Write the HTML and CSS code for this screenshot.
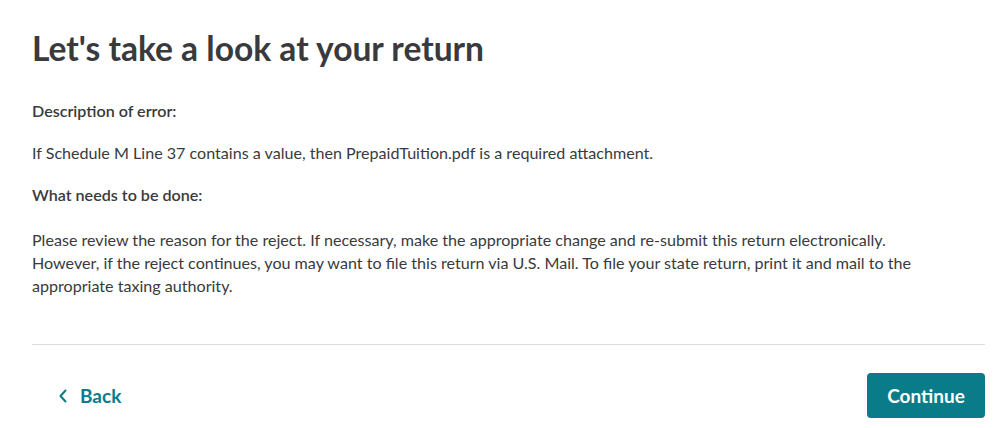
FILE: index.html
```html
<!DOCTYPE html>
<html lang="en">
<head>
    <meta charset="UTF-8">
    <title>Let's take a look at your return</title>
    <link rel="stylesheet" href="styles.css">
</head>
<body>
    <div class="page">
        <h1>Let's take a look at your return</h1>
        <p class="label">Description of error:</p>
        <p>If Schedule M Line 37 contains a value, then PrepaidTuition.pdf is a required attachment.</p>
        <p class="label">What needs to be done:</p>
        <p class="para">Please review the reason for the reject. If necessary, make the appropriate change and re-submit this return electronically.<br>
        However, if the reject continues, you may want to file this return via U.S. Mail. To file your state return, print it and mail to the<br>
        appropriate taxing authority.</p>
        <div class="footer">
            <button class="back-btn">
                <svg width="10" height="14" viewBox="0 0 10 14"><path d="M7.5 1.5 L2.5 7 L7.5 12.5" fill="none" stroke="#0a7b88" stroke-width="2" stroke-linecap="round" stroke-linejoin="round"/></svg>
                Back
            </button>
            <button class="continue-btn">Continue</button>
        </div>
    </div>
</body>
</html>
```

FILE: styles.css
```css
body {
    margin: 0;
    font-family: Lato, "Open Sans", sans-serif;
    color: #393a3d;
    background: white;
}
.page {
    padding: 23px 14px 0 32px;
}
h1 {
    font-size: 33.6px;
    font-weight: 700;
    margin: 0 0 26px;
    line-height: 50px;
}
p {
    font-size: 16.1px;
    line-height: 24px;
    margin: 0 0 18px;
}
.label {
    font-weight: 600;
}
.para {
    line-height: 23px;
    margin: 21px 0 0;
}
.footer {
    margin-top: 47px;
    border-top: 1px solid #dcdde0;
    padding-top: 28px;
    display: flex;
    justify-content: space-between;
    align-items: center;
}
button {
    font-family: inherit;
    font-size: 19px;
    font-weight: 700;
    border: none;
    cursor: pointer;
}
.back-btn {
    background: none;
    color: #0a7b88;
    display: flex;
    align-items: center;
    gap: 12px;
    padding: 10px 0 10px 26px;
}
.continue-btn {
    background: #0a7b88;
    color: white;
    border-radius: 4px;
    width: 118px;
    height: 45px;
}
```
